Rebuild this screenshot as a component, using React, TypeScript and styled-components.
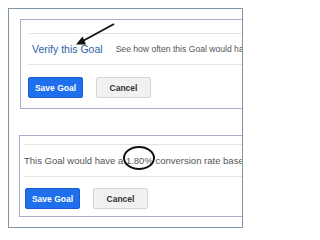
import styled, { createGlobalStyle } from "styled-components";

const GlobalStyle = createGlobalStyle`
  html, body {
    margin: 0;
    padding: 0;
    background: #ffffff;
    font-family: "Liberation Sans", Arial, sans-serif;
  }
`;

const Stage = styled.div`
  position: relative;
  width: 250px;
  height: 236px;
  padding: 8px 0 0 8px;
  box-sizing: border-box;
`;

const Frame = styled.div`
  width: 235px;
  height: 220px;
  box-sizing: border-box;
  border: 1px solid #7f95a3;
  overflow: hidden;
  display: flex;
  flex-direction: column;
  padding-top: 10px;
`;

const Panel = styled.div<{ $left: number; $top: number; $bottom: number }>`
  width: 260px;
  margin-left: ${({ $left }) => $left}px;
  border: 1px solid #a7aec9;
  padding: ${({ $top }) => $top}px 0 ${({ $bottom }) => $bottom}px 0;
  & + & {
    margin-top: 26px;
  }
`;

const InfoRow = styled.div<{ $inset: number; $height: number }>`
  display: flex;
  align-items: center;
  height: ${({ $height }) => $height}px;
  margin-left: ${({ $inset }) => $inset}px;
  border-top: 1px solid #e4e4e4;
  border-bottom: 1px solid #e4e4e4;
  white-space: nowrap;
`;

const VerifyLink = styled.span`
  color: #2d5e9f;
  font-size: 10.5px;
  margin-left: 4px;
`;

const Hint = styled.span`
  color: #555555;
  font-size: 8.6px;
  margin-left: 13px;
`;

const Result = styled.span`
  color: #555555;
  font-size: 9.5px;
`;

const ButtonRow = styled.div<{ $inset: number; $gap: number; $top: number }>`
  display: flex;
  gap: ${({ $gap }) => $gap}px;
  margin: ${({ $top }) => $top}px 0 0 ${({ $inset }) => $inset}px;
`;

const Button = styled.button<{ $primary?: boolean }>`
  width: 55px;
  height: 21px;
  padding: 0;
  box-sizing: border-box;
  border-radius: 2px;
  font-family: "Liberation Sans", Arial, sans-serif;
  font-weight: bold;
  font-size: 8.5px;
  color: ${({ $primary }) => ($primary ? "#ffffff" : "#333333")};
  background: ${({ $primary }) => ($primary ? "#1f6fec" : "#f1f1f1")};
  border: 1px solid ${({ $primary }) => ($primary ? "#1a60d0" : "#d6d6d6")};
`;

const Annotation = styled.svg`
  position: absolute;
  left: 0;
  top: 0;
  width: 250px;
  height: 236px;
  pointer-events: none;
`;

export default function App() {
  return (
    <>
      <GlobalStyle />
      <Stage>
        <Frame>
          <Panel $left={11} $top={13} $bottom={10}>
            <InfoRow $inset={7} $height={30}>
              <VerifyLink>Verify this Goal</VerifyLink>
              <Hint>See how often this Goal would have converted in the last 7 days.</Hint>
            </InfoRow>
            <ButtonRow $inset={7} $gap={13} $top={12}>
              <Button $primary>Save Goal</Button>
              <Button>Cancel</Button>
            </ButtonRow>
          </Panel>
          <Panel $left={10} $top={8} $bottom={7}>
            <InfoRow $inset={4} $height={31}>
              <Result>This Goal would have a 1.80% conversion rate based on the past 7 days.</Result>
            </InfoRow>
            <ButtonRow $inset={5} $gap={13} $top={11}>
              <Button $primary>Save Goal</Button>
              <Button>Cancel</Button>
            </ButtonRow>
          </Panel>
        </Frame>
        <Annotation viewBox="0 0 250 236">
          <line x1="114" y1="24" x2="80" y2="42.5" stroke="#111" strokeWidth="1.8" />
          <polygon points="76,44.5 86,44.5 82.5,36.5" fill="#111" />
          <ellipse cx="139" cy="158" rx="15" ry="11" fill="none" stroke="#111" strokeWidth="2" />
        </Annotation>
      </Stage>
    </>
  );
}
